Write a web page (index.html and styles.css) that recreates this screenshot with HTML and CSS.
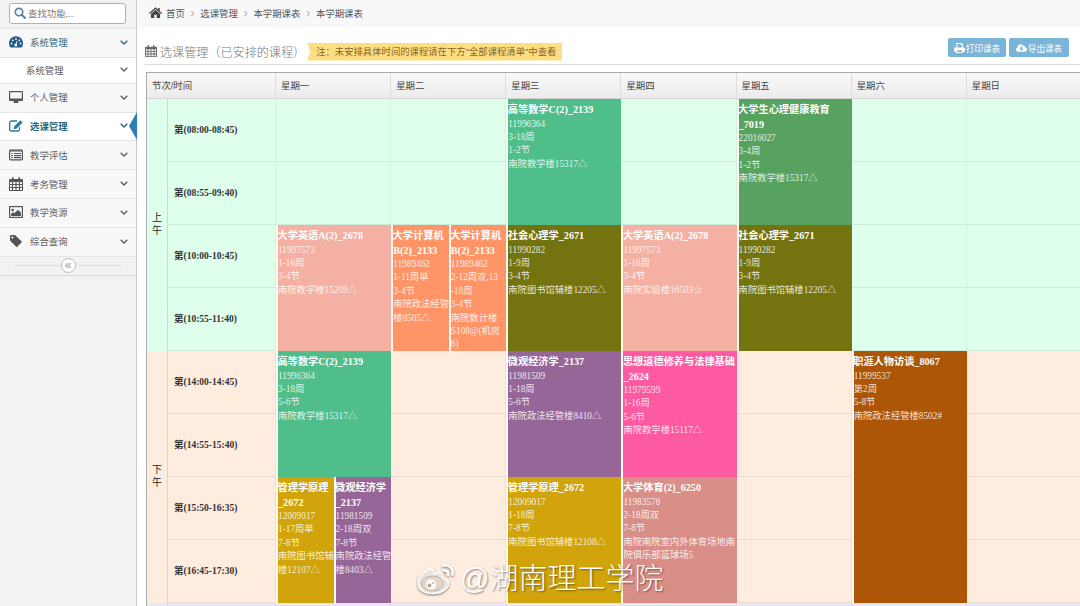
FILE: index.html
```html
<!DOCTYPE html>
<html lang="zh-CN">
<head>
	<meta charset="UTF-8">
	<title>本学期课表</title>
	<link rel="stylesheet" href="styles.css">
</head>
<body>
	<!-- 图标 -->
	<svg class="defs">
		<symbol id="arrow" viewBox="0 0 8 5"><path d="M.7.7 4 4 7.3.7" fill="none" stroke="currentColor" stroke-width="1.3"/></symbol>
		<symbol id="calendar" viewBox="0 0 14 14"><path fill="currentColor" fill-rule="evenodd" d="M1 2h2V.8Q3 0 3.8 0t.8.8V2h4.8V.8q0-.8.8-.8t.8.8V2h2q1 0 1 1v10q0 1-1 1H1q-1 0-1-1V3q0-1 1-1zM1 5v2h2V5zm3 0v2h2.500V5zm3.500 0v2H10V5zM11 5v2h2V5zM1 8v2h2V8zm3 0v2h2.500V8zm3.500 0v2H10V8zM11 8v2h2V8zM1 11v2h2v-2zm3 0v2h2.500v-2zm3.500 0v2H10v-2zm3.500 0v2h2v-2z"/></symbol>
	</svg>
	<!-- 左侧菜单开始 -->
	<aside class="sidebar">
		<div class="search">
			<svg viewBox="0 0 12 12"><circle cx="5" cy="5" r="3.700" fill="none" stroke="#5583a5" stroke-width="1.700"/><path d="M7.800 7.800 11 11" stroke="#5583a5" stroke-width="2" stroke-linecap="round"/></svg>
			<span>查找功能...</span>
		</div>
		<ul class="nav">
			<li class="open">
				<svg class="icon" viewBox="0 0 14 12"><path fill="#1d5a8c" d="M1.500 11.500A7 7 0 1 1 12.500 11.500z"/><g fill="#fff"><circle cx="2.500" cy="7.500" r=".9"/><circle cx="3.800" cy="4.300" r=".9"/><circle cx="7" cy="3" r=".9"/><circle cx="10.200" cy="4.300" r=".9"/><circle cx="11.500" cy="7.500" r=".9"/><circle cx="6.800" cy="9" r="1.500"/></g><path d="M6.800 9 8 5" stroke="#fff" stroke-width=".9"/></svg>
				<span>系统管理</span><svg class="arrow"><use href="#arrow"/></svg>
			</li>
			<li class="sub"><span>系统管理</span><svg class="arrow"><use href="#arrow"/></svg></li>
			<li>
				<svg class="icon" viewBox="0 0 14 12"><path fill="#555" fill-rule="evenodd" d="M1 0h12q1 0 1 1v8q0 1-1 1H9l.5 1.300V12h-5v-.7L5 10H1q-1 0-1-1V1q0-1 1-1zm.2 1.200v6.300h11.600V1.200z"/></svg>
				<span>个人管理</span><svg class="arrow"><use href="#arrow"/></svg>
			</li>
			<li class="active">
				<svg class="icon" viewBox="0 0 14 12"><path d="M10.500 7v2.500q0 1.500-1.500 1.500H2.200Q.7 11 .7 9.500v-7Q.7 1 2.200 1H8" fill="none" stroke="#2b7c96" stroke-width="1.300"/><path fill="#2b7c96" d="m11.300.3 2.300 2.200-6 6-2.900.7.6-2.900z"/></svg>
				<span>选课管理</span><svg class="arrow"><use href="#arrow"/></svg>
			</li>
			<li>
				<svg class="icon" viewBox="0 0 14 12"><rect x=".6" y="1.100" width="12.800" height="9.800" rx=".8" fill="none" stroke="#555" stroke-width="1.200"/><path d="M1 2h12M2.300 4.500h1.400M5 4.500h7M2.300 6.600h1.400M5 6.600h7M2.300 8.700h1.400M5 8.700h7" stroke="#555" stroke-width="1.200"/></svg>
				<span>教学评估</span><svg class="arrow"><use href="#arrow"/></svg>
			</li>
			<li>
				<svg class="icon cal"><use href="#calendar"/></svg>
				<span>考务管理</span><svg class="arrow"><use href="#arrow"/></svg>
			</li>
			<li>
				<svg class="icon" viewBox="0 0 14 12"><rect x=".6" y=".6" width="12.800" height="10.800" fill="none" stroke="#555" stroke-width="1.200"/><circle cx="3.700" cy="4" r="1.300" fill="#555"/><path fill="#555" d="M2 10V8l2-2 1.300 1.300L9 3.700l3 3V10z"/></svg>
				<span>教学资源</span><svg class="arrow"><use href="#arrow"/></svg>
			</li>
			<li>
				<svg class="icon" viewBox="0 0 14 12"><path fill="#555" fill-rule="evenodd" d="M1 1q0-1 1-1h4l6.500 6.200q.6.600 0 1.200L8.300 11.700q-.6.500-1.200 0L1 5.500zM3.300 1.400a1 1 0 1 0 .1 0z"/></svg>
				<span>综合查询</span><svg class="arrow"><use href="#arrow"/></svg>
			</li>
		</ul>
		<div class="collapse"><i>«</i></div>
	</aside>
	<!-- 左侧菜单结束 -->
	<main>
		<div class="breadcrumb">
			<svg viewBox="0 0 14 12"><path fill="#444" d="M7 .3 9.800 2.800V1.200h1.800v3.200L14 6.600l-.9 1.100L7 2.300.9 7.700 0 6.600zM7 3.100l5 4.500V12H8.300V8.500H5.700V12H2V7.600z"/></svg>
			<span>首页</span><b>›</b><span>选课管理</span><b>›</b><span>本学期课表</span><b>›</b><span>本学期课表</span>
		</div>
		<div class="title">
			<svg class="cal"><use href="#calendar"/></svg>
			<h1>选课管理（已安排的课程）</h1>
			<span class="note">注：未安排具体时间的课程请在下方"全部课程清单"中查看</span>
			<div class="btns">
				<a class="btn"><svg viewBox="0 0 12 11"><path fill="#fff" fill-rule="evenodd" d="M2.500 0h5.800L9.800 1.500V5h.7Q12 5 12 6.500V9.500H9.800V11H2.200V9.500H0v-3Q0 5 1.500 5h1zM3.600 1.100V5h5V2.300H7.500V1.100zM3.400 8v1.900h5.200V8z"/></svg>打印课表</a>
				<a class="btn"><svg viewBox="0 0 13 11"><path fill="#fff" fill-rule="evenodd" d="M3 10Q0 10 0 7.200 0 5.300 2 4.600 2 1 5.500 1q2.600 0 3.500 2.200 2-.3 2.200 1.700Q13 5.500 13 7.400 13 10 10.500 10zM5.600 3.800v2.400H4l2.500 2.700L9 6.200H7.400V3.800z"/></svg>导出课表</a>
			</div>
		</div>
		<!-- 课表开始 -->
		<table class="timetable">
			<colgroup><col class="c-part"><col class="c-time"><col><col><col><col><col><col><col></colgroup>
			<thead>
				<tr><th colspan="2">节次/时间</th><th>星期一</th><th>星期二</th><th>星期三</th><th>星期四</th><th>星期五</th><th>星期六</th><th>星期日</th></tr>
			</thead>
			<tbody class="am">
				<tr>
					<td rowspan="4" class="part">上<br>午</td>
					<td class="time">第(08:00-08:45)</td>
					<td></td><td></td>
					<td rowspan="2"><div class="slot"><div class="course green"><h4>高等数学C(2)_2139</h4>11996364<br>3-18周<br>1-2节<br>南院教学楼15317△</div></div></td>
					<td></td>
					<td rowspan="2"><div class="slot"><div class="course leaf"><h4>大学生心理健康教育<br>_7019</h4>22016027<br>3-4周<br>1-2节<br>南院教学楼15317△</div></div></td>
					<td></td><td></td>
				</tr>
				<tr><td class="time">第(08:55-09:40)</td><td></td><td></td><td></td><td></td><td></td></tr>
				<tr>
					<td class="time">第(10:00-10:45)</td>
					<td rowspan="2"><div class="slot"><div class="course salmon"><h4>大学英语A(2)_2678</h4>11997573<br>1-16周<br>3-4节<br>南院教学楼15209△</div></div></td>
					<td rowspan="2"><div class="slot">
						<div class="course orange"><h4>大学计算机<br>B(2)_2133</h4>11989462<br>1-11周单<br>3-4节<br>南院政法经管<br>楼8505△</div>
						<div class="course orange"><h4>大学计算机<br>B(2)_2133</h4>11989462<br>2-12周双,13<br>-18周<br>3-4节<br>南院数计楼<br>S108@(机房<br>6)</div>
					</div></td>
					<td rowspan="2"><div class="slot"><div class="course olive"><h4>社会心理学_2671</h4>11990282<br>1-9周<br>3-4节<br>南院图书馆辅楼12205△</div></div></td>
					<td rowspan="2"><div class="slot"><div class="course salmon"><h4>大学英语A(2)_2678</h4>11997573<br>1-16周<br>3-4节<br>南院实验楼16503☆</div></div></td>
					<td rowspan="2"><div class="slot"><div class="course olive"><h4>社会心理学_2671</h4>11990282<br>1-9周<br>3-4节<br>南院图书馆辅楼12205△</div></div></td>
					<td></td><td></td>
				</tr>
				<tr><td class="time">第(10:55-11:40)</td><td></td><td></td></tr>
			</tbody>
			<tbody class="pm">
				<tr>
					<td rowspan="4" class="part">下<br>午</td>
					<td class="time">第(14:00-14:45)</td>
					<td rowspan="2"><div class="slot"><div class="course green"><h4>高等数学C(2)_2139</h4>11996364<br>3-18周<br>5-6节<br>南院教学楼15317△</div></div></td>
					<td></td>
					<td rowspan="2"><div class="slot"><div class="course purple"><h4>微观经济学_2137</h4>11981509<br>1-18周<br>5-6节<br>南院政法经管楼8410△</div></div></td>
					<td rowspan="2"><div class="slot"><div class="course pink"><h4>思想道德修养与法律基础<br>_2624</h4>11979599<br>1-16周<br>5-6节<br>南院教学楼15117△</div></div></td>
					<td></td>
					<td rowspan="4"><div class="slot long"><div class="course brown"><h4>职涯人物访谈_8067</h4>11999537<br>第2周<br>5-8节<br>南院政法经管楼8502#</div></div></td>
					<td></td>
				</tr>
				<tr><td class="time">第(14:55-15:40)</td><td></td><td></td><td></td></tr>
				<tr>
					<td class="time">第(15:50-16:35)</td>
					<td rowspan="2"><div class="slot">
						<div class="course gold"><h4>管理学原理<br>_2672</h4>12009017<br>1-17周单<br>7-8节<br>南院图书馆辅<br>楼12107△</div>
						<div class="course purple"><h4>微观经济学<br>_2137</h4>11981509<br>2-18周双<br>7-8节<br>南院政法经管<br>楼8403△</div>
					</div></td>
					<td></td>
					<td rowspan="2"><div class="slot"><div class="course gold"><h4>管理学原理_2672</h4>12009017<br>1-18周<br>7-8节<br>南院图书馆辅楼12108△</div></div></td>
					<td rowspan="2"><div class="slot"><div class="course rose"><h4>大学体育(2)_6250</h4>11983578<br>2-18周双<br>7-8节<br>南院南院室内外体育场地南<br>院俱乐部篮球场5</div></div></td>
					<td></td><td></td>
				</tr>
				<tr><td class="time">第(16:45-17:30)</td><td></td><td></td><td></td></tr>
			</tbody>
			<tbody class="night">
				<tr><td></td><td></td><td></td><td></td><td></td><td></td><td></td><td></td><td></td></tr>
			</tbody>
		</table>
		<!-- 课表结束 -->
	</main>
	<!-- 水印 -->
	<div class="watermark">
		<svg viewBox="0 0 40 34"><g fill="none" stroke="#fff" stroke-linecap="round"><path fill="#fff" fill-opacity=".75" stroke-width="1.500" d="M16 7c2 1 2 3 1.500 5 4-2 8-2 9 0 .7 1.500 0 2.500-.3 3.500 4 1 6.500 3 6.500 6 0 5-7 10-16 10S2 27.500 2 21.500C2 15 11 5 16 7z"/><path stroke-width="2.500" d="M27 3.500c6-1.500 11 3.500 9.500 9.500M27.500 8.500c3-.5 5 1.500 4.500 4.500"/></g><ellipse cx="16.500" cy="21.500" rx="11" ry="7.500" fill="#e3d3c4" fill-opacity=".8" stroke="#b9a897" stroke-width=".8"/><circle cx="15" cy="22.500" r="5" fill="#fff"/><circle cx="13.500" cy="23.500" r="2" fill="#b7a492"/><circle cx="17" cy="21" r=".9" fill="#b7a492"/></svg>
		<span>@湖南理工学院</span>
	</div>
</body>
</html>
```
FILE: styles.css
```css
*{
	margin:0;
	padding:0;
	box-sizing:border-box;
}
body{
	display:flex;
	width:1080px;
	height:606px;
	overflow:hidden;
	position:relative;
	background:#fff;
	color:#666;
	font:9.4px "Liberation Sans","Noto Sans CJK SC",sans-serif;
}
ul{
	list-style:none;
}
svg{
	display:block;
	flex:none;
}
.defs{
	display:none;
}
/* 左侧菜单 */
.sidebar{
	width:137px;
	height:606px;
	flex:none;
	background:#f2f2f3;
	border-right:1px solid #ccc;
}
.search{
	display:flex;
	align-items:center;
	gap:2px;
	width:117px;
	height:21px;
	margin:3px 0 4px 9px;
	padding:0 0 1px 4px;
	background:#fff;
	border:1px solid #94b9cb;
	border-radius:3px;
	color:#777;
}
.search svg{
	width:12px;
	height:12px;
}
.nav li{
	display:flex;
	align-items:center;
	height:28.8px;
	padding:0 8px 1px 9px;
	background:#f8f8f9;
	border-top:1px solid #e5e5e5;
	color:#5b5b5b;
	position:relative;
}
.nav span{
	flex:1;
}
.nav .icon{
	width:14px;
	height:12px;
	margin-right:7px;
}
.nav .cal{
	height:14px;
	color:#555;
}
.nav .arrow{
	width:8px;
	height:5px;
}
.nav .open{
	color:#2f6679;
}
.nav .sub{
	height:26px;
	padding-left:26px;
	background:#fff;
}
.nav .active{
	background:#fff;
	color:#1f6a82;
	font-weight:bold;
}
.nav .active:after{
	content:"";
	position:absolute;
	right:-1px;
	top:-1px;
	border:14px solid transparent;
	border-right:8px solid #2b7dbc;
	border-left:0;
}
.collapse{
	height:20px;
	border-top:1px solid #e5e5e5;
	border-bottom:1px solid #ddd;
	display:flex;
	align-items:center;
	padding:0 14px;
}
.collapse:before,
.collapse:after{
	content:"";
	flex:1;
	height:1px;
	background:#ddd;
}
.collapse i{
	width:15px;
	height:15px;
	line-height:12px;
	border:1px solid #bbb;
	border-radius:50%;
	background:#fff;
	color:#999;
	font-style:normal;
	font-size:12px;
	text-align:center;
}
/* 右侧内容 */
main{
	flex:1;
	min-width:0;
	overflow:hidden;
}
.breadcrumb{
	height:27px;
	padding:0 0 2px 12px;
	background:#f8f8f8;
	display:flex;
	align-items:center;
	color:#555;
}
.breadcrumb svg{
	width:13px;
	height:11px;
	margin-right:4px;
}
.breadcrumb b{
	width:15.6px;
	text-align:center;
	font-weight:normal;
	font-size:12px;
	color:#aaa;
}
.title{
	display:flex;
	align-items:center;
	height:38px;
	margin-left:8px;
	padding-top:11px;
	border-bottom:1px solid #ddd;
}
.title .cal{
	width:12px;
	height:12px;
	color:#666;
	margin-right:3px;
}
.title h1{
	font-size:12.1px;
	font-weight:300;
	color:#777;
	white-space:nowrap;
}
.note{
	width:255px;
	height:18px;
	line-height:18px;
	margin:1px 0 0 2px;
	padding-left:9px;
	background:#fddf83;
	color:#8b6420;
	font-size:9.35px;
	white-space:nowrap;
	clip-path:polygon(0 0,100% 0,100% 100%,0 100%,3px 50%);
}
.btns{
	display:flex;
	gap:3px;
	margin:-8px 11px 0 auto;
}
.btn{
	display:flex;
	align-items:center;
	justify-content:center;
	gap:1px;
	width:58px;
	height:19px;
	padding-top:1px;
	border-radius:2px;
	background:#79b5d8;
	color:#fff;
	font-size:8.6px;
	white-space:nowrap;
}
.btn + .btn{
	width:60px;
}
.btn svg{
	width:11px;
	height:10px;
}
/* 课表 */
.timetable{
	table-layout:fixed;
	width:936px;
	margin:7px 0 0 9px;
	border-spacing:0;
	border-top:1px solid #aaa;
	border-left:1px solid #aaa;
}
.c-part{
	width:21px;
}
.c-time{
	width:108px;
}
th{
	height:26px;
	padding:0 0 2px 5px;
	text-align:left;
	font-weight:normal;
	color:#444;
	background:linear-gradient(#f9f9f9,#ebebeb);
	border-right:1px solid #ddd;
	border-bottom:1px solid #d5d5d5;
}
td{
	height:63px;
	border-right:1px solid rgba(120,150,130,.12);
	border-bottom:1px solid rgba(120,130,120,.15);
}
td[rowspan]{
	border-bottom:0;
	vertical-align:top;
}
td.part{
	vertical-align:middle;
	text-align:center;
	font-size:10px;
	line-height:13px;
	color:#222;
	padding-bottom:2px;
	border-right:1px solid rgba(120,130,120,.25);
}
.am{
	background:#ddffeb;
}
.pm{
	background:#feecdf;
}
.night{
	background:#e6e8fa;
}
.time{
	padding:0 0 2px 6px;
	color:#333;
	font:bold 9.5px "Liberation Serif","Noto Sans CJK SC",serif;
}
.slot{
	display:flex;
	height:126px;
	margin-right:-1px;
}
.long{
	height:252px;
}
.course{
	flex:1 1 0;
	min-width:0;
	padding-top:4px;
	border-left:2px solid #fff8ee;
	color:rgba(255,255,255,.85);
	font:9.3px/13.4px "Liberation Serif","Noto Sans CJK SC",serif;
	white-space:nowrap;
	text-indent:-.5px;
}
.course h4{
	color:#fff;
	font-size:10.2px;
	line-height:14.5px;
}
.green{
	background:#50be8a;
}
.leaf{
	background:#58a260;
}
.salmon{
	background:#f4b0a2;
}
.orange{
	background:#ff9567;
}
.olive{
	background:#73730f;
}
.purple{
	background:#976699;
}
.pink{
	background:#fd5aa2;
}
.gold{
	background:#d0a40a;
}
.rose{
	background:#d98e87;
}
.brown{
	background:#ad5607;
}
/* 水印 */
.watermark{
	position:absolute;
	left:416px;
	top:560px;
	display:flex;
	align-items:center;
	gap:4px;
	color:#fff;
	font-size:29px;
	font-weight:300;
	line-height:38px;
	text-shadow:1px 1px 2px rgba(0,0,0,.45);
}
.watermark svg{
	width:40px;
	height:34px;
	filter:drop-shadow(0 1px 1px rgba(0,0,0,.5));
}
```
